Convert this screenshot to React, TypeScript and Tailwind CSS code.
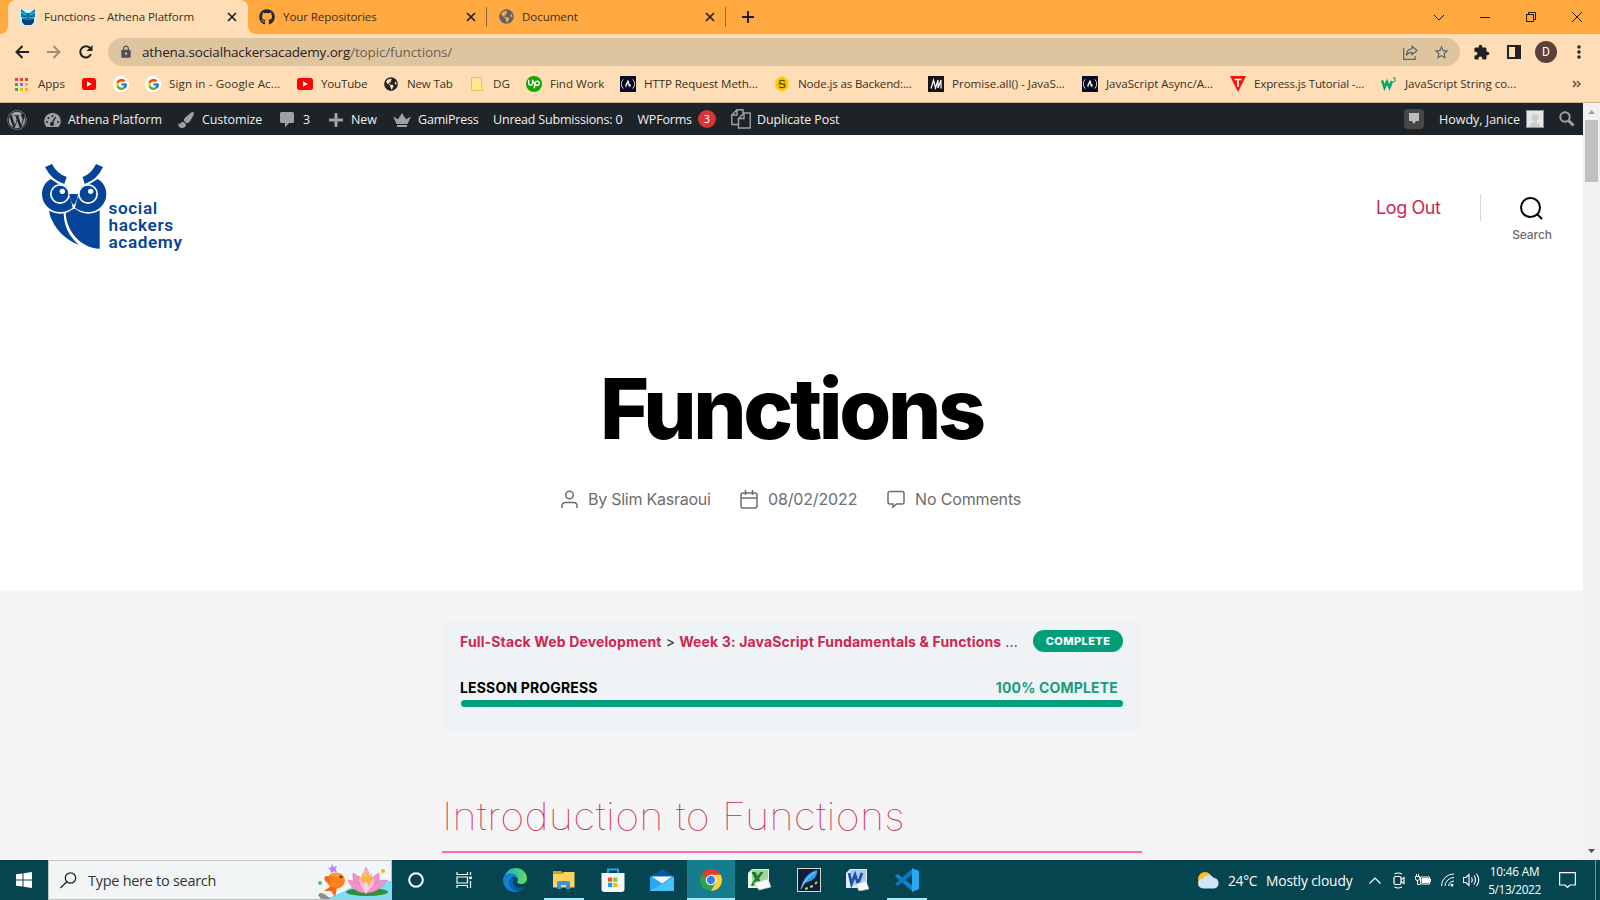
import type { ReactNode } from "react";
import { FaGithub, FaWordpress, FaGlobeAmericas, FaPaintBrush } from "react-icons/fa";
import { FcGoogle } from "react-icons/fc";
import { SiUpwork, SiFreecodecamp } from "react-icons/si";
import { MdExtension, MdStarBorder, MdLock } from "react-icons/md";

const Close = () => (
  <svg width="10" height="10" viewBox="0 0 10 10" stroke="#202124" strokeWidth="1.7">
    <path d="M1 1l8 8M9 1l-8 8" />
  </svg>
);

const TabOwl = () => (
  <svg width="16" height="16" viewBox="0 0 16 16">
    <rect width="16" height="16" fill="#c9f1f7" />
    <path d="M1 0l5 4h4l5-4v8l-1 1v4l-3 3H5l-3-3V9L1 8z" fill="#0d74ad" />
    <path d="M2 10l4 1h4l4-1v3l-3 3H5l-3-3z" fill="#0a3f7c" />
    <path d="M1 3l5 3M15 3l-5 3M2 8.500h4.500M9.500 8.500H14" stroke="#2cc3dd" strokeWidth="1.300" />
    <path d="M3.500 7h2v1h-2zM10.500 7h2v1h-2z" fill="#06244c" />
  </svg>
);

function TabStrip() {
  return (
    <div className="flex h-[34px] items-center bg-[#ffa940] text-[11.6px] tracking-[-0.1px] text-[#3a2f25]">
      <div className="h-2 w-2 self-end bg-[#ffdeb7]"><div className="h-2 rounded-br-lg bg-[#ffa940]" /></div>
      <div className="flex h-[34px] w-[240px] items-center rounded-t-lg bg-[#ffdeb7] pl-3 pr-[11px]">
        <TabOwl />
        <span className="ml-2 flex-1 whitespace-nowrap">Functions – Athena Platform</span>
        <Close />
      </div>
      <div className="h-2 w-2 self-end bg-[#ffdeb7]"><div className="h-2 rounded-bl-lg bg-[#ffa940]" /></div>
      <div className="flex w-[230px] items-center pl-[3px] pr-[10px]">
        <FaGithub size={16} color="#24292e" />
        <span className="ml-2 flex-1 whitespace-nowrap">Your Repositories</span>
        <Close />
      </div>
      <div className="h-5 w-px bg-[#8d6a3c]" />
      <div className="flex w-[238px] items-center pl-[12px] pr-[10px]">
        <FaGlobeAmericas size={15} color="#5f6368" />
        <span className="ml-2 flex-1 whitespace-nowrap">Document</span>
        <Close />
      </div>
      <div className="h-5 w-px bg-[#8d6a3c]" />
      <svg className="ml-4" width="12" height="12" stroke="#202124" strokeWidth="2"><path d="M6 0v12M0 6h12" /></svg>
      <div className="ml-auto flex h-[29px] items-center gap-9 pr-[18px]">
        <svg width="10" height="10" fill="none" stroke="#1b1b1b"><path d="M0 3l5 5 5-5" /></svg>
        <svg width="10" height="10" stroke="#1b1b1b"><path d="M0 5.5h10" /></svg>
        <svg width="10" height="10" fill="none" stroke="#1b1b1b"><path d="M.5 2.5h7v7h-7zM2.5 2.5v-2h7v7h-2" /></svg>
        <svg width="10" height="10" stroke="#1b1b1b"><path d="M0 0l10 10M10 0L0 10" /></svg>
      </div>
    </div>
  );
}

function Toolbar() {
  return (
    <div className="flex h-9 items-center bg-[#ffdeb7] pl-[15px]">
      <svg width="14" height="14" fill="none" stroke="#202124" strokeWidth="2"><path d="M14 7H1.5M7.5 1l-6 6 6 6" /></svg>
      <svg className="ml-[18px]" width="14" height="14" fill="none" stroke="#a18c74" strokeWidth="2"><path d="M0 7h12.500M6.500 1l6 6-6 6" /></svg>
      <svg className="ml-[18px]" width="14" height="14" fill="none" stroke="#202124" strokeWidth="2">
        <path d="M12 9.200A5.600 5.600 0 1 1 11 3" /><path d="M13.500 0v6h-6z" fill="#202124" stroke="none" />
      </svg>
      <div className="ml-[15px] flex h-7 w-[1352px] items-center rounded-full bg-[#dfc4a0] pl-[11px] pr-[10px]">
        <MdLock size={14} color="#4d5156" />
        <div className="ml-[9px] flex-1 whitespace-nowrap text-[13.5px] tracking-[-0.15px] text-[#6f6350]">
          <span className="text-[#26221d]">athena.socialhackersacademy.org</span>/topic/functions/
        </div>
        <svg width="15" height="15" fill="none" stroke="#5f6368" strokeWidth="1.200">
          <path d="M.7 3v11.300h11.500V11" /><path d="M9 1.200l5 4.300-5 4.300V7.300C6 7.300 4.500 8.500 3.300 10.500 3.500 6.800 5.500 4 9 3.700z" />
        </svg>
        <MdStarBorder className="ml-[15px]" size={17} color="#5f6368" />
      </div>
      <MdExtension className="ml-[13px]" size={17} color="#202124" />
      <svg className="ml-[17px]" width="14" height="14"><path d="M1 1h12v12H1z" fill="none" stroke="#202124" strokeWidth="2" /><path d="M8 0h6v14H8z" fill="#202124" /></svg>
      <div className="ml-[14px] flex h-[22px] w-[22px] items-center justify-center rounded-full bg-[#5d4037] font-[Roboto] text-xs text-white">D</div>
      <svg className="ml-5" width="4" height="14" fill="#202124"><circle cx="2" cy="2" r="1.700" /><circle cx="2" cy="7" r="1.700" /><circle cx="2" cy="12" r="1.700" /></svg>
    </div>
  );
}

const YouTube = () => (
  <svg width="16" height="12"><rect width="16" height="12" rx="2.500" fill="#f00" /><path d="M6 3.300v5.400L11 6z" fill="#fff" /></svg>
);
const Google = () => (
  <span className="flex h-4 w-4 items-center justify-center rounded-full bg-white"><FcGoogle size={13} /></span>
);
const Fcc = () => (
  <span className="flex h-4 w-4 items-center justify-center bg-[#0a0a23]"><SiFreecodecamp size={14} color="#fff" /></span>
);

function Bookmark({ icon, label, className }: { icon: ReactNode; label?: string; className: string }) {
  return (
    <div className={`flex h-5 shrink-0 items-center ${className}`}>
      <span className="flex h-4 w-4 shrink-0 items-center justify-center">{icon}</span>
      {label && <span className="ml-2 whitespace-nowrap">{label}</span>}
    </div>
  );
}

function AppsGrid() {
  const colors = ["#ea4335", "#ea4335", "#ea4335", "#34a853", "#4285f4", "#fbbc04", "#34a853", "#fbbc04", "#fbbc04"];
  return (
    <svg className="-ml-0.5" width="13" height="13">
      {colors.map((c, i) => <rect key={i} x={(i % 3) * 5} y={Math.floor(i / 3) * 5} width="3" height="3" fill={c} />)}
    </svg>
  );
}

function Bookmarks() {
  return (
    <div className="flex h-[33px] items-center border-b border-[#cdb292] bg-[#ffdeb7] pb-[4px] pl-[14px] text-[11.6px] tracking-[-0.03px] text-[#3b3026]">
      <Bookmark className="w-[67px]" icon={<AppsGrid />} label="Apps" />
      <Bookmark className="w-[32px]" icon={<svg width="14" height="12"><rect width="14" height="12" rx="2.500" fill="#f00" /><path d="M5 3.300v5.400L10 6z" fill="#fff" /></svg>} />
      <Bookmark className="w-[32px]" icon={<Google />} />
      <Bookmark className="w-[152px] tracking-[0.12px]" icon={<Google />} label="Sign in - Google Ac..." />
      <Bookmark className="w-[86px] tracking-[-0.2px]" icon={<YouTube />} label="YouTube" />
      <Bookmark className="w-[86px] tracking-[-0.2px]" icon={<FaGlobeAmericas size={14} color="#202124" />} label="New Tab" />
      <Bookmark className="w-[57px]" icon={<svg width="12" height="14"><path d="M.5.500h10V10h1v3.500H.5z" fill="#fde68f" stroke="#e9c44b" /></svg>} label="DG" />
      <Bookmark className="w-[94px]" icon={<span className="flex h-4 w-4 items-center justify-center rounded-full bg-[#14a800]"><SiUpwork size={12} color="#fff" /></span>} label="Find Work" />
      <Bookmark className="w-[154px] tracking-[-0.1px]" icon={<Fcc />} label="HTTP Request Meth..." />
      <Bookmark className="w-[154px] tracking-[-0.17px]" icon={<svg width="16" height="16"><path d="M8 0l6.500 4v8L8 16l-6.500-4V4z" fill="#fc0" /><path d="M11 5.500C9.500 4 5.500 4 5.500 6s5.500 1.800 5.500 4-4 2.200-6 .5M4 8h8" fill="none" stroke="#5e4c00" strokeWidth="1.200" /></svg>} label="Node.js as Backend:..." />
      <Bookmark className="w-[154px]" icon={<svg width="16" height="16"><rect width="16" height="16" fill="#15141a" /><path d="M3 12.500L5.500 4 7.500 12 10 4V12M10 12L13 4V12.500" fill="none" stroke="#fff" strokeWidth="1.200" /></svg>} label="Promise.all() - JavaS..." />
      <Bookmark className="w-[148px]" icon={<Fcc />} label="JavaScript Async/A..." />
      <Bookmark className="w-[151px] tracking-[-0.16px]" icon={<svg width="16" height="16"><path d="M0 0h16L8 16z" fill="#f5120b" /><path d="M4.500 3.500h7M8 3.500V11" stroke="#fff" strokeWidth="1.700" /></svg>} label="Express.js Tutorial -..." />
      <Bookmark className="w-[191px]" icon={<svg width="16" height="14" fill="none" stroke="#04aa6d"><path d="M1 3.500l2.500 7L6 5l2.500 5.500L11 4" strokeWidth="2.600" /><path d="M12 1h2.500L13 2.800c2 0 2 2.500-.8 2" /></svg>} label="JavaScript String co..." />
      <svg width="9" height="8" fill="none" stroke="#5f5346" strokeWidth="1.500"><path d="M1 1l3 3-3 3M5 1l3 3-3 3" /></svg>
    </div>
  );
}

function AdminBar() {
  return (
    <div className="flex h-8 items-center bg-[#1d2327] pt-0.5 text-[12.500px] tracking-[-0.1px] whitespace-nowrap text-[#f0f0f1]">
      <span className="flex w-[44px] pl-[7px]"><FaWordpress className="-mt-px" size={20} color="#9ca2a7" /></span>
      <span className="flex w-[134px] items-center gap-[7px]">
        <svg width="17" height="15" viewBox="0 0 17 15"><path d="M2.500 14A8.300 8.300 0 1 1 14.500 14z" fill="#9ca2a7" /><path d="M8 10.500L11.500 4" stroke="#1d2327" strokeWidth="1.500" /><g fill="#1d2327"><circle cx="8" cy="11" r="2" /><circle cx="3" cy="9" r="1" /><circle cx="4.500" cy="5" r="1" /><circle cx="8.500" cy="3" r="1" /><circle cx="14" cy="9" r="1" /></g></svg>
        Athena Platform
      </span>
      <span className="flex w-[102px] items-center gap-2"><FaPaintBrush size={16} color="#9ca2a7" />Customize</span>
      <span className="flex w-[49px] items-center gap-[9px]">
        <svg width="14" height="16"><path d="M1.500 0h11A1.500 1.500 0 0 1 14 1.500v8a1.500 1.500 0 0 1-1.500 1.500H9l-4 4.500V11H1.500A1.500 1.500 0 0 1 0 9.500v-8A1.500 1.500 0 0 1 1.500 0z" fill="#9ca2a7" /></svg>3
      </span>
      <span className="flex w-[64px] items-center gap-2"><svg width="14" height="14"><path d="M5.500 0h3v5.500H14v3H8.500V14h-3V8.500H0v-3h5.500z" fill="#9ca2a7" /></svg>New</span>
      <span className="flex w-[100px] items-center gap-[7px] tracking-[-0.2px]"><svg width="18" height="14"><path d="M3.500 11L0 3.500l5 2.700L9 0l4 6.200 5-2.700L14.500 11zM4 12h10v2H4z" fill="#9ca2a7" /></svg>GamiPress</span>
      <span className="w-[144.500px] tracking-[-0.2px]">Unread Submissions: 0</span>
      <span className="flex w-[93.500px] items-center gap-[6px] tracking-[-0.2px]">WPForms<span className="-mt-0.5 flex h-[18px] w-[18px] items-center justify-center rounded-full bg-[#d63638] text-[11px] text-white">3</span></span>
      <span className="flex items-center gap-[6px]">
        <svg className="-mt-0.5" width="20" height="20" fill="none" stroke="#9ca2a7" strokeWidth="1.400"><path d="M7 15.500H.8V6L6 .8h6V4M.8 6H6V.8M7.500 10v9h11.700V4H13L7.500 9.500H13V4" /></svg>
        Duplicate Post
      </span>
      <span className="ml-auto flex items-center pr-2">
        <span className="-mt-0.5 flex h-5 w-5 items-center justify-center rounded-sm bg-[#474747]"><svg width="12" height="12"><path d="M1 0h10v8H8l-2 3-2-3H1z" fill="#bdbdbd" /></svg></span>
        <span className="ml-[15px] w-[81px] tracking-normal">Howdy, Janice</span>
        <svg className="-mt-0.5 ml-[6px]" width="18" height="18"><rect x=".5" y=".5" width="17" height="17" fill="#e6e6e6" stroke="#8c8f94" /><circle cx="9" cy="7.500" r="3.500" fill="#ccc" /><path d="M4 17c0-7 10-7 10 0z" fill="#ccc" /></svg>
        <svg className="-mt-0.5 ml-[15px]" width="16" height="16" fill="none" stroke="#9ca2a7"><circle cx="6" cy="6" r="4.700" strokeWidth="2" /><path d="M9.500 9.500l5 5" strokeWidth="3" /></svg>
      </span>
    </div>
  );
}

const Owl = () => (
  <svg width="66" height="87" viewBox="121 99 198 261" fill="#064497">
    <path d="M145 243C152 285 188 327 234 344C204 318 190 288 189 250z" />
    <path d="M195 248C197 300 237 354 297 356V240L220 236z" />
    <g fill="#fff"><circle cx="178" cy="192" r="59" /><circle cx="263" cy="192" r="59" /></g>
    <path d="M150 147C132 158 124 175 124 192A54 54 0 0 0 178 246C195 246 207 240 216 233L208 195L200 170L172 161z" />
    <path d="M291 147C309 158 317 175 317 192A54 54 0 0 1 263 246C246 246 233 240 223 233L232 195L240 170L268 161z" />
    <g fill="#fff"><circle cx="178" cy="192" r="30" /><circle cx="262" cy="192" r="30" /><path d="M198 160H242L238 188L219 232L201 188z" /></g>
    <path d="M206 192H232Q230 213 219 226Q208 213 206 192z" />
    <circle cx="178" cy="192" r="25" /><circle cx="262" cy="192" r="25" />
    <g fill="#fff"><circle cx="185" cy="184" r="8" /><circle cx="270" cy="184" r="8" /></g>
    <g stroke="#fff" strokeWidth="5" paintOrder="stroke">
      <path d="M133 111L154 102Q168 131 198 141L191 162Q151 149 133 111z" />
      <path d="M307 111L286 102Q273 131 246 141L252 162Q290 149 307 111z" />
    </g>
  </svg>
);

function Hero() {
  return (
    <div className="flex h-[456px] flex-col bg-white font-[Inter]">
      <header className="flex h-[150px] items-start justify-between pl-[41px] pr-[31px]">
        <div className="flex pt-[28px]">
          <Owl />
          <div className="ml-[1.500px] pt-[37px] font-[Roboto] text-[17.200px] leading-[17px] font-semibold tracking-[0.6px] text-[#064497]">
            <div>social</div><div>hackers</div><div>academy</div>
          </div>
        </div>
        <div className="flex pt-[59px]">
          <span className="mt-0.5 w-[104px] text-[18px] leading-6 tracking-[-0.4px] text-[#cd2653]">Log Out</span>
          <div className="h-[27px] w-px bg-[#dcd7ca]" />
          <div className="ml-[31px] flex w-10 flex-col items-center pt-[3px]">
            <svg className="-ml-0.5" width="23" height="23" fill="none" stroke="#000" strokeWidth="2"><circle cx="10.500" cy="10.500" r="9.500" /><path d="M17 17l5 5" /></svg>
            <span className="mt-[7px] text-[12px] leading-4 font-medium tracking-[-0.1px] text-[#6d6d6d]">Search</span>
          </div>
        </div>
      </header>
      <h1 className="mt-[74px] h-[100px] text-center text-[84px] leading-[100px] font-extrabold tracking-[-3.300px] text-black">Functions</h1>
      <div className="mt-[28px] ml-[562px] flex items-center text-base tracking-[-0.15px] whitespace-nowrap text-[#6d6d6d]">
        <svg className="-ml-px" width="17" height="19" fill="none" stroke="#6d6d6d" strokeWidth="1.500"><circle cx="8.500" cy="5" r="3.800" /><path d="M1 18v-2c0-2 1.500-3.500 3.500-3.500h8c2 0 3.500 1.500 3.500 3.500v2" /></svg>
        <span className="ml-[10px] w-[152px] tracking-[-0.25px]">By Slim Kasraoui</span>
        <svg width="18" height="19" fill="none" stroke="#6d6d6d" strokeWidth="1.500"><rect x="1" y="3" width="16" height="15" rx="2" /><path d="M1 8h16M5.500 0v5M12.500 0v5" /></svg>
        <span className="ml-[10px] w-[119px]">08/02/2022</span>
        <svg width="18" height="19" fill="none" stroke="#6d6d6d" strokeWidth="1.500"><path d="M3 1.500h12a2 2 0 0 1 2 2v8.500a2 2 0 0 1-2 2H9.500L6 17v-3H3a2 2 0 0 1-2-2V3.500a2 2 0 0 1 2-2z" /></svg>
        <span className="ml-[10px]">No Comments</span>
      </div>
    </div>
  );
}

function Lesson() {
  return (
    <main className="flex h-[269px] flex-col items-center bg-[#f5f5f5] pt-[30px] pl-px font-[Inter]">
      <section className="h-[110px] w-[700px] rounded-md bg-[#eff3f6] px-[19px] pt-[9px]">
        <div className="flex h-[22px] items-center whitespace-nowrap">
          <p className="-ml-px w-[573px] text-[14px] tracking-[0.14px] text-[#333]">
            <b className="font-bold text-[#cd2653]">Full-Stack Web Development</b> &gt; <b className="font-bold text-[#cd2653]">Week 3: JavaScript Fundamentals &amp; Functions</b> ...
          </p>
          <span className="flex h-[22px] w-[90px] items-center justify-center rounded-full bg-[#019e7c] text-[11px] font-extrabold tracking-[0.4px] text-white">COMPLETE</span>
        </div>
        <div className="mt-[25px] flex h-[20px] items-center justify-between pr-[5px] text-[14px] font-bold tracking-[0.17px]">
          <span className="-ml-px text-black">LESSON PROGRESS</span>
          <span className="text-[#1a9c7d]">100% COMPLETE</span>
        </div>
        <div className="mt-[3px] h-[7px] rounded-full bg-[#019e7c]" />
      </section>
      <h2 className="mt-[55px] h-[67px] w-[700px] border-b-2 border-[#ff69b4] text-[38px] leading-[60px] font-thin tracking-[0.3px] whitespace-nowrap text-[#cd2653]">
        <span className="inline-block origin-left scale-x-[1.086]">Introduction to Functions</span>
      </h2>
    </main>
  );
}

const Lotus = () => (
  <svg width="74" height="38" viewBox="0 0 74 38">
    <path d="M8 38Q30 30 38 24Q58 16 74 20V38z" fill="#7fdcf3" />
    <ellipse cx="50" cy="31" rx="21" ry="4" fill="#2f8f3a" />
    <g fill="#f392c6" stroke="#e26aa8" strokeWidth=".5">
      <path d="M49 31Q34 24 36 12Q48 18 49 31zM49 31Q64 24 62 12Q50 18 49 31z" />
      <path d="M49 31Q43 16 49 6Q56 16 49 31z" fill="#f9b4d7" />
      <path d="M49 32Q36 32 31 19Q44 20 49 32zM49 32Q62 32 70 19Q54 20 49 32z" />
      <path d="M49 32Q40 26 42 15Q50 22 49 32zM49 32Q60 26 58 15Q50 22 49 32z" fill="#f9b4d7" />
    </g>
    <path d="M44 19l1-7 3 4 2-7 2 7 3-4v7l-4 5z" fill="#fbb72d" />
    <path d="M49 33Q43 27 49 20Q55 27 49 33z" fill="#fcd3e6" />
    <ellipse cx="19" cy="19.500" rx="9" ry="8" fill="#f7821e" />
    <path d="M13 16Q7 13 7.500 18Q8 22 13 22zM14 25L7 30l7 0 4 6 2-9z" fill="#f2691a" />
    <path d="M13 14Q18 10 24 13L20 16z" fill="#fb9c34" />
    <circle cx="24" cy="16" r="1.300" fill="#7a2b00" />
    <path d="M15 3l1.500 3 3.500-1-1.500 3 1.500 3-3.500-.5-2.500 1.500-.5-3-2.500-2 3-.5z" fill="#c77dff" />
    <circle cx="3" cy="22" r="2" fill="#46c86f" /><circle cx="66" cy="10" r="2" fill="#fbb013" />
    <path d="M1 34Q3 30 9 34L14 38H4z" fill="#8f8f8f" />
  </svg>
);

function Task({ className, children }: { className: string; children: ReactNode }) {
  return <div className={`flex h-10 w-12 shrink-0 items-center justify-center ${className}`}>{children}</div>;
}

function Taskbar() {
  return (
    <footer className="flex h-10 items-center bg-[#04454f] text-white">
      <div className="flex w-12 justify-center">
        <svg width="16" height="16" fill="#fff"><path d="M0 2.300L6.500 1.400V7.500H0zM7.500 1.200L16 0v7.500H7.500zM0 8.500h6.500v6.100L0 13.700zM7.500 8.500H16V16l-8.500-1.200z" /></svg>
      </div>
      <div className="flex h-10 w-[344px] items-center border border-[#bfc3c4] bg-[#f1f5f6] pl-[11px]">
        <svg width="17" height="17" fill="none" stroke="#222" strokeWidth="1.300"><circle cx="10.500" cy="6" r="5.200" /><path d="M6.800 9.800L.5 16" /></svg>
        <span className="ml-[11px] flex-1 pt-0.5 text-[14.500px] tracking-[-0.28px] text-[#333]">Type here to search</span>
        <Lotus />
      </div>
      <Task className=""><svg width="18" height="18"><circle cx="9" cy="9" r="6.800" fill="none" stroke="#fff" strokeWidth="2" /></svg></Task>
      <Task className="">
        <svg width="17" height="16" fill="none" stroke="#fff" strokeWidth="1.200"><path d="M1 0v2.500h10.500V0M1 16v-2.500h10.500V16M1 5h10.500v6H1zM14.500 0v3M14.500 9v7" /><path d="M13.200 4.500h2.600v2.600h-2.600z" fill="#fff" stroke="none" /></svg>
      </Task>
      <Task className="pl-[6px]">
        <svg width="24" height="24" viewBox="0 0 24 24">
          <defs>
            <linearGradient id="edgeTop"><stop stopColor="#1aa7e6" /><stop offset="1" stopColor="#5fe05a" /></linearGradient>
            <linearGradient id="edgeLow"><stop stopColor="#0a66c2" /><stop offset="1" stopColor="#0b4b8d" /></linearGradient>
          </defs>
          <path d="M1 10C2 4 7 0 12.500 0 19 0 24 5 24 10.500c0 3.500-2.800 5.500-5.500 5.500-3 0-5-1-4-2.500 1-2 0-5.500-4-5.500C6 8 1 10 0 13z" fill="url(#edgeTop)" />
          <path d="M0 12C0 8 4 5.500 8 5.500c4 0 7 2.500 7 6-1-2-3-3-5-2.500-3 1-4 5-2 8.500 2.500 4 8 5 13.500 1.500C19 22.500 16 24 12 24 5 24 0 18.500 0 12z" fill="#1680d0" />
          <path d="M8.500 9.500c-3 2-3.500 7-.5 10.500 2 2.500 5 3.800 7 3.500 3-.7 5.200-2.300 6.800-4.500-4 2-8.800 1-10.800-2-1.500-2-1.200-4-.2-5.500z" fill="url(#edgeLow)" />
        </svg>
      </Task>
      <Task className="pl-2">
        <div className="flex h-10 w-10 items-center justify-center border-b-2 border-[#a5ecf8] pt-[2px]">
          <svg width="22" height="18"><path d="M0 0h8l2 2v4H0z" fill="#e09a0f" /><path d="M0 3h9l2-2h10.500v15.500H0z" fill="#ffd35c" /><path d="M4 18v-6.500A1.500 1.500 0 0 1 5.500 10h10a1.500 1.500 0 0 1 1.500 1.500V18h-4v-4H8v4z" fill="#3c94dd" /></svg>
        </div>
      </Task>
      <Task className="pl-[9px]">
        <svg width="24" height="24"><path d="M7 6V1.500h10V6" fill="none" stroke="#22a6ee" strokeWidth="2" /><path d="M.5 5h23v16a3 3 0 0 1-3 3h-17a3 3 0 0 1-3-3z" fill="#f6f6f6" /><path d="M7 9.500h4.200v4.200H7z" fill="#f1511b" /><path d="M12.300 9.500h4.200v4.200h-4.200z" fill="#80cc28" /><path d="M7 14.800h4.200V19H7z" fill="#00adef" /><path d="M12.300 14.800h4.200V19h-4.200z" fill="#fbbc09" /></svg>
      </Task>
      <Task className="pl-3">
        <svg width="24" height="22"><path d="M0 7.500L12 0l12 7.500V9H0z" fill="#0b56a4" /><path d="M0 7.500V22h24V7.500z" fill="#2aa9ee" /><path d="M0 22L24 8v14z" fill="#48c1f7" /><path d="M2 7.500h20L12 14.500z" fill="#f4f8fb" /></svg>
      </Task>
      <div className="ml-[7px] flex h-10 w-12 items-center justify-center border-b-2 border-[#a5ecf8] bg-[#157d8d] pt-[2px]">
        <svg width="22" height="22" viewBox="0 0 22 22">
          <path d="M11 11L1.500 5.500A11 11 0 0 1 20.500 5.500z" fill="#e33b2e" />
          <path d="M11 11L1.500 5.500A11 11 0 0 0 11 22l4.800-8.200z" fill="#2ba24c" />
          <path d="M11 5.800h9.700A11 11 0 0 1 11 22l4.800-8.500z" fill="#fdd13a" />
          <circle cx="11" cy="11" r="5.300" fill="#fff" /><circle cx="11" cy="11" r="4.200" fill="#3b7ded" />
        </svg>
      </div>
      <Task className="">
        <svg width="23" height="22"><path d="M4 0h17v19H0V4z" fill="#e9f5e6" /><path d="M4 1h16v12L4 18z" fill="#8fcd84" opacity=".8" /><path d="M3.500 3h4l2 4 3-4h3L11 9.500l4.500 7h-4l-2.500-5-3.500 5h-3L7 10z" fill="#217a37" /><path d="M6 14l14-4 3 8-12 3z" fill="#fafafa" stroke="#b9cdb7" strokeWidth=".7" /></svg>
      </Task>
      <Task className="pl-1">
        <svg width="24" height="24"><rect x=".5" y=".5" width="23" height="23" fill="#171c35" stroke="#d8d8d8" /><path d="M4 20C6 10 12 4 20 2c1 5-3 11-12 13z" fill="#2ba0ea" /><path d="M4 21C7 14 11 9 18 4" stroke="#a8e0ff" fill="none" /><path d="M8 21l3-1M13 19l3-1M18 16l2-2" stroke="#8fdc9a" strokeWidth="2" /></svg>
      </Task>
      <Task className="pl-[5px]">
        <svg width="23" height="22"><path d="M4 0h17v19H0V4z" fill="#e4eefb" /><path d="M4 1h16v11L4 18z" fill="#9cc1ef" opacity=".8" /><path d="M3 4l2.500 11L9 5.500 12 15l4-11" fill="none" stroke="#1c4fa5" strokeWidth="2.600" /><path d="M10 15l10-3 3 8-10 2z" fill="#fafafa" stroke="#b5c1d6" strokeWidth=".7" /></svg>
      </Task>
      <div className="ml-[8px] flex h-10 w-10 items-center justify-center border-b-2 border-[#a5ecf8] pt-[2px]">
        <svg width="24" height="24" viewBox="0 0 24 24"><path d="M0 8l2.500-2L18 18v6z" fill="#1484cf" /><path d="M0 16l2.500 2L18 6V0z" fill="#0f78c2" /><path d="M17 0l7 3v18l-7 3z" fill="#29a8f0" /></svg>
      </div>
      <div className="ml-auto flex items-center whitespace-nowrap">
        <svg width="21" height="17"><circle cx="7" cy="7" r="7" fill="#fbbf2d" /><path d="M5 16.500a5 5 0 0 1 0-10 6.500 6.500 0 0 1 11-.500 5.300 5.300 0 0 1 0 10.500z" fill="#cfe4f7" /></svg>
        <span className="ml-[9px] w-[38px] pt-0.5 text-[13.800px] tracking-[-0.3px]">24°C</span>
        <span className="w-[102px] pt-0.5 text-[13.800px] tracking-[-0.15px]">Mostly cloudy</span>
        <svg className="ml-px" width="12" height="7" fill="none" stroke="#fff" strokeWidth="1.200"><path d="M.5 6.500l5.500-5.500 5.500 5.500" /></svg>
        <svg className="ml-[12px]" width="12" height="17" fill="none" stroke="#fff" strokeWidth="1.200"><rect x="1" y="4.500" width="7" height="8" rx="1.500" /><path d="M8 7.500l3-2v6l-3-2M1.500 2Q5 0 9 2M1.500 15Q5 17 9 15" /></svg>
        <svg className="ml-[10px]" width="17" height="12" fill="none" stroke="#fff"><path d="M5.500 3h9v7h-9zM15.500 5v3M.5 2.500h4v2a2 2 0 0 1-4 0zM1.500 0v2M3.500 0v2M2.500 6v4.500H5" /><path d="M7 4.500h6.500v4H7z" fill="#fff" /></svg>
        <svg className="ml-[9px]" width="13" height="14" fill="none" stroke="#fff"><path d="M0.500 13A12 12 0 0 1 13 1M4 13a9 9 0 0 1 9-8.500M7.500 13A6 6 0 0 1 13 8" /><circle cx="11" cy="12" r="1.500" fill="#fff" stroke="none" /></svg>
        <svg className="ml-[9px]" width="17" height="14" fill="none" stroke="#fff" strokeWidth="1.100"><path d="M.5 4.500H3L6 1.500v11l-3-3H.5zM8.500 4.500q1.500 2.500 0 5M11 2.500q3 4.500 0 9M13.500.8q4.500 6.200 0 12.400" /></svg>
        <div className="ml-[7px] w-[55px] text-center text-[11.800px] leading-[18px] tracking-[-0.35px]"><div className="-mt-px tracking-[-0.2px]">10:46 AM</div><div>5/13/2022</div></div>
        <svg className="ml-[17px]" width="17" height="17" fill="none" stroke="#fff" strokeWidth="1.200"><path d="M.6.600h15.800v12.400H11l-2.500 2.500L6 13H.6z" /></svg>
        <div className="ml-[19px] h-10 w-px bg-[#6a979d]" /><div className="w-1" />
      </div>
    </footer>
  );
}

export default function App() {
  return (
    <div className="flex h-[900px] w-[1600px] flex-col overflow-hidden font-['Open_Sans',sans-serif]">
      <TabStrip />
      <Toolbar />
      <Bookmarks />
      <div className="flex h-[757px]">
        <div className="w-[1583px]">
          <AdminBar />
          <Hero />
          <Lesson />
        </div>
        <div className="flex w-[17px] flex-col items-center bg-[#f1f1f1]">
          <svg className="mt-[7px]" width="7" height="4"><path d="M0 4l3.500-4L7 4z" fill="#a3a3a3" /></svg>
          <div className="mt-[6px] h-[62px] w-[13px] bg-[#c1c1c1]" />
          <svg className="mt-auto mb-[7px]" width="7" height="4"><path d="M0 0l3.500 4L7 0z" fill="#505050" /></svg>
        </div>
      </div>
      <Taskbar />
    </div>
  );
}
